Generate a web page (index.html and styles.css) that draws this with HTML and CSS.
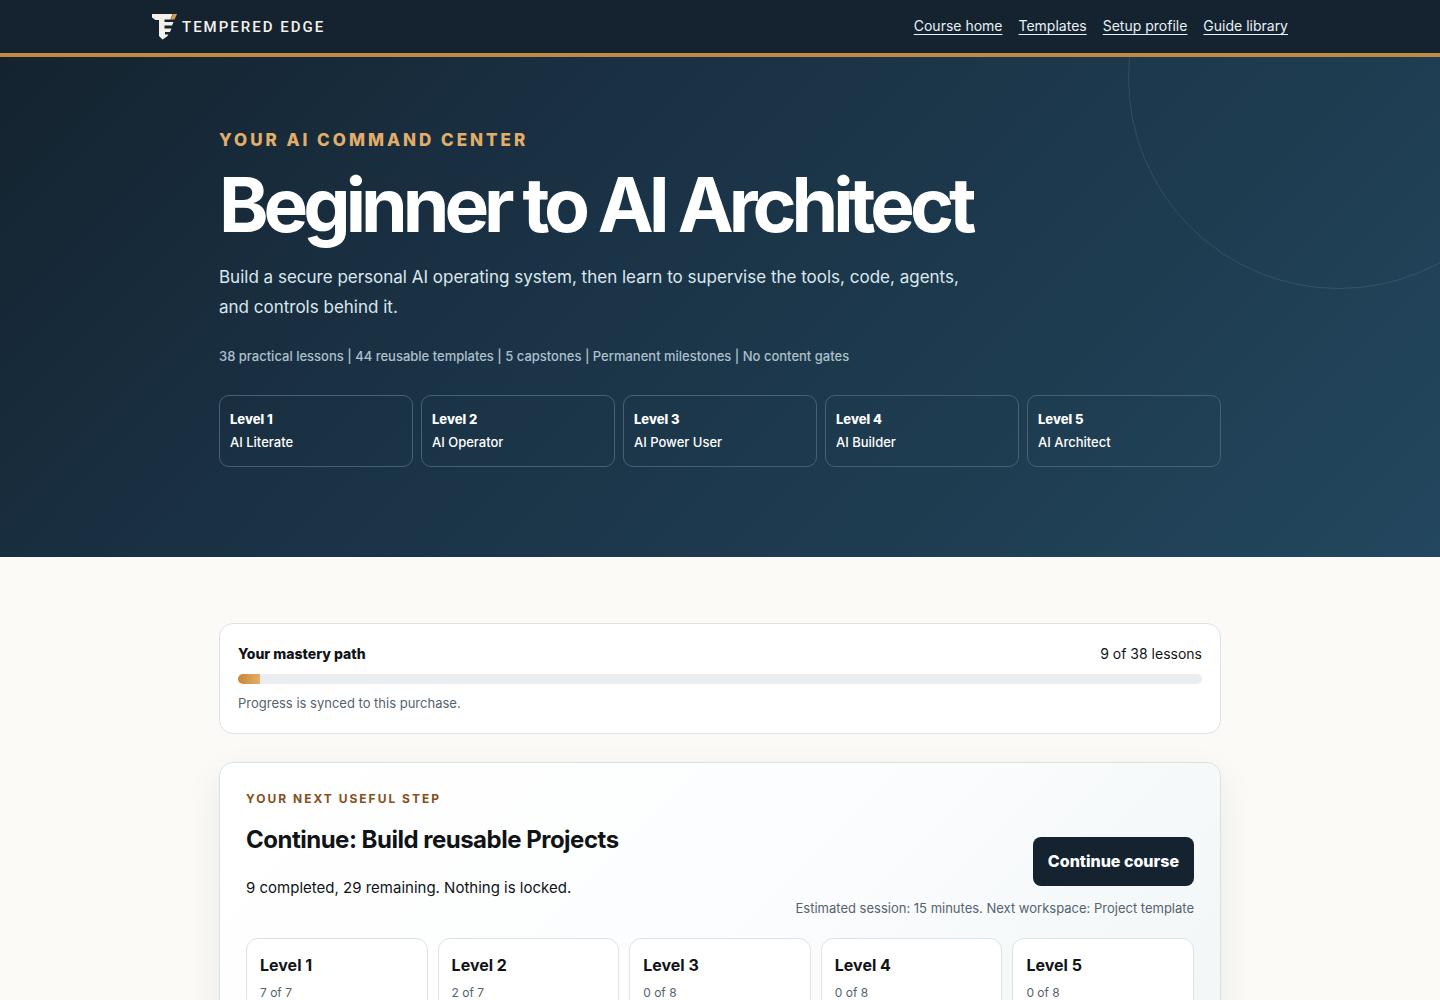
FILE: index.html
```html
<!DOCTYPE html>
<html lang="en">
<head>
<meta charset="utf-8">
<meta name="viewport" content="width=device-width, initial-scale=1">
<title>Beginner to AI Architect | Tempered Edge</title>
<link rel="stylesheet" href="styles.css">
</head>
<body>
<header class="site-header">
  <div class="header-inner">
    <a class="brand" href="#">
      <svg class="brand-mark" viewBox="0 0 25 26" aria-hidden="true">
        <path fill="#f4f1ea" d="M0 0H20.500L18.500 5.500H12.500V8H21.500L20 11.500H12.500V14.500H19.500L18 18H13V20.500H16.500L15 22.500L10.500 25.500L7 22V6H3.500L0 3.500Z"/>
        <path fill="#d99a4e" d="M20.800 0H25L22.500 5.500H18.800Z"/>
      </svg>
      <span class="brand-name">TEMPERED EDGE</span>
    </a>
    <nav class="site-nav" aria-label="Main">
      <a href="#">Course home</a>
      <a href="#">Templates</a>
      <a href="#">Setup profile</a>
      <a href="#">Guide library</a>
    </nav>
  </div>
</header>
<section class="hero">
  <div class="container">
    <p class="hero-kicker">YOUR AI COMMAND CENTER</p>
    <h1>Beginner to AI Architect</h1>
    <p class="lead">Build a secure personal AI operating system, then learn to supervise the tools, code, agents, and controls behind it.</p>
    <p class="facts">38 practical lessons | 44 reusable templates | 5 capstones | Permanent milestones | No content gates</p>
    <ul class="levels">
      <li><strong>Level 1</strong><span>AI Literate</span></li>
      <li><strong>Level 2</strong><span>AI Operator</span></li>
      <li><strong>Level 3</strong><span>AI Power User</span></li>
      <li><strong>Level 4</strong><span>AI Builder</span></li>
      <li><strong>Level 5</strong><span>AI Architect</span></li>
    </ul>
  </div>
</section>
<main class="container">
  <section class="mastery">
    <div class="mastery-head"><strong>Your mastery path</strong><span>9 of 38 lessons</span></div>
    <div class="track"><div class="fill"></div></div>
    <p class="note">Progress is synced to this purchase.</p>
  </section>
  <section class="next">
    <div class="next-top">
      <div>
        <p class="next-kicker">YOUR NEXT USEFUL STEP</p>
        <h2>Continue: Build reusable Projects</h2>
        <p class="summary">9 completed, 29 remaining. Nothing is locked.</p>
      </div>
      <div class="next-action">
        <a class="button" href="#">Continue course</a>
        <p class="note">Estimated session: 15 minutes. Next workspace: Project template</p>
      </div>
    </div>
    <ul class="progress-levels">
      <li><strong>Level 1</strong><span>7 of 7</span></li>
      <li><strong>Level 2</strong><span>2 of 7</span></li>
      <li><strong>Level 3</strong><span>0 of 8</span></li>
      <li><strong>Level 4</strong><span>0 of 8</span></li>
      <li><strong>Level 5</strong><span>0 of 8</span></li>
    </ul>
  </section>
</main>
</body>
</html>
```
FILE: styles.css
```css
* { box-sizing: border-box; }
body {
  margin: 0;
  background: #fbfaf7;
  color: #101417;
  font-family: Inter, "Liberation Sans", sans-serif;
  font-size: 16px;
  line-height: 26px;
}
p, h1, h2, ul { margin: 0; padding: 0; }
ul { list-style: none; }

.site-header { background: #14232f; border-bottom: 4px solid #c18a43; }
.header-inner {
  display: flex;
  align-items: center;
  justify-content: space-between;
  max-width: 1184px;
  min-height: 53px;
  margin: 0 auto;
  padding: 0 24px;
}
.brand { display: flex; align-items: center; gap: 5px; color: #f4f1ea; text-decoration: none; }
.brand-mark { width: 25px; height: 26px; }
.brand-name { font-family: Roboto, sans-serif; font-size: 15px; font-weight: 500; letter-spacing: 2px; }
.site-nav { display: flex; gap: 16px; padding-bottom: 2px; }
.site-nav a { color: #e8f1f6; font-size: 14px; text-underline-offset: 3px; }

.container { max-width: 1050px; margin: 0 auto; padding: 0 24px; }
.hero {
  position: relative;
  overflow: hidden;
  padding: 68px 0 90px;
  background: linear-gradient(135deg, #14232f 0%, #1a3144 35%, #1e3c50 70%, #23475f 100%);
  color: #fff;
}
.hero::after {
  content: "";
  position: absolute;
  top: -190px;
  right: -110px;
  width: 420px;
  height: 420px;
  border: 1px solid rgba(255, 255, 255, .1);
  border-radius: 50%;
}
.hero-kicker { color: #e2ae69; font-size: 17px; line-height: 30px; font-weight: 800; letter-spacing: 3px; }
h1 { margin-top: 12px; font-size: 75px; line-height: 76px; font-weight: 700; letter-spacing: -5px; }
.lead { max-width: 760px; margin-top: 19px; color: #dbe7ee; font-size: 17px; line-height: 30px; }
.facts { margin-top: 21px; color: #adc0cd; font-size: 13px; font-weight: 500; }
.levels { display: grid; grid-template-columns: repeat(5, 1fr); gap: 8px; margin-top: 26px; }
.levels li {
  display: flex;
  flex-direction: column;
  min-height: 72px;
  padding: 12px 10px;
  border: 1px solid #466170;
  border-radius: 10px;
  font-size: 13px;
  font-weight: 500;
  line-height: 23px;
}
.levels strong { font-weight: 800; }

.mastery { margin-top: 66px; padding: 18px; background: #fff; border: 1px solid #dce2e6; border-radius: 14px; }
.mastery-head { display: flex; justify-content: space-between; font-size: 14px; line-height: 24px; }
.mastery-head strong { font-weight: 800; }
.track { height: 10px; margin: 8px 0; background: #e9edef; border-radius: 5px; overflow: hidden; }
.fill { width: 22px; height: 10px; background: linear-gradient(90deg, #c98635, #e2ae69); }
.note { color: #55636e; font-size: 13px; line-height: 23px; }

.next {
  margin-top: 28px;
  padding: 24px 26px;
  background: linear-gradient(135deg, #fff 0%, #fcfdfe 50%, #f1f6f7 100%);
  border: 1px solid #d8e1e6;
  border-radius: 14px;
  box-shadow: 0 14px 36px rgba(20, 35, 47, .08);
}
.next-top { display: flex; justify-content: space-between; align-items: flex-end; }
.next-kicker { color: #85501d; font-size: 12px; line-height: 24px; font-weight: 700; letter-spacing: 2px; }
h2 { margin-top: 13px; font-size: 24px; line-height: 32px; font-weight: 700; letter-spacing: -0.5px; }
.summary { margin-top: 19px; margin-bottom: 19px; font-size: 15px; }
.next-action { display: flex; flex-direction: column; align-items: flex-end; gap: 11px; }
.button {
  padding: 11px 15px 12px;
  background: #14232f;
  border-radius: 8px;
  color: #fff;
  font-weight: 800;
  text-decoration: none;
}
.progress-levels { display: grid; grid-template-columns: repeat(5, 1fr); gap: 10px; margin-top: 18px; }
.progress-levels li {
  display: flex;
  flex-direction: column;
  gap: 2px;
  padding: 13px;
  background: #fff;
  border: 1px solid #dce2e6;
  border-radius: 12px;
}
.progress-levels span { color: #55636e; font-size: 12px; }
```
